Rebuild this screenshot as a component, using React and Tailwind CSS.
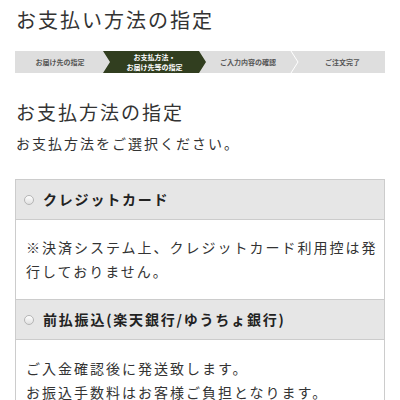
import React from 'react';

const font = { fontFamily: '"Noto Sans CJK JP", "Noto Sans", sans-serif' };

function Steps() {
  return (
    <div className="mx-[15px] mt-[16px] flex h-[22px] bg-[#dedede] text-[7px] font-bold leading-[10px]">
      <div className="flex w-[88px] items-center justify-center pl-[2px] text-[#555]">お届け先の指定</div>
      <div className="flex w-[103px] flex-col items-center justify-center bg-[#313e1f] text-white [clip-path:polygon(0_0,96px_0,103px_50%,96px_100%,0_100%,7px_50%)]">
        <span>お支払方法・</span>
        <span>お届け先等の指定</span>
      </div>
      <div className="flex w-[84px] items-center justify-center text-[#555]">ご入力内容の確認</div>
      <svg width="10" height="22" viewBox="0 0 10 22" className="shrink-0">
        <polyline points="1,0 8,11 1,22" fill="none" stroke="#fff" strokeWidth="1" />
      </svg>
      <div className="flex flex-1 items-center justify-center text-[#555]">ご注文完了</div>
    </div>
  );
}

function Radio() {
  return (
    <span className="mr-[9px] inline-block h-[10px] w-[10px] shrink-0 rounded-full border border-[#b5b5b5] bg-gradient-to-b from-white to-[#e0e0e0]" />
  );
}

function Option({ label, children, pt }) {
  return (
    <>
      <div className="flex h-[40px] items-center border-b border-[#cccccc] bg-[#e6e6e6] pl-[8px] text-[14px] font-bold tracking-[1.8px] text-[#222]">
        <Radio />
        <span>{label}</span>
      </div>
      <div className={`border-b border-[#cccccc] pr-[2px] pl-[10px] text-[14px] leading-[24px] tracking-[2px] text-[#333] ${pt}`}>
        {children}
      </div>
    </>
  );
}

export default function App() {
  return (
    <div className="h-[400px] w-[400px] overflow-hidden bg-white" style={font}>
      <h1 className="pt-[5px] pl-[16px] text-[20px] leading-[30px] font-normal tracking-[2px] text-[#333]">
        お支払い方法の指定
      </h1>
      <Steps />
      <h2 className="mt-[25px] pl-[16px] text-[19px] leading-[28px] font-normal tracking-[2px] text-[#333]">
        お支払方法の指定
      </h2>
      <p className="mt-[6px] pl-[16px] text-[14px] leading-[22px] tracking-[2px] text-[#333]">
        お支払方法をご選択ください。
      </p>
      <div className="mx-[15px] mt-[25px] border-x border-t border-[#cccccc]">
        <Option label="クレジットカード" pt="pt-[15px] pb-[16px]">
          ※決済システム上、クレジットカード利用控は発行しておりません。
        </Option>
        <Option label="前払振込(楽天銀行/ゆうちょ銀行)" pt="pt-[16px] pb-[18px]">
          <p>ご入金確認後に発送致します。</p>
          <p>お振込手数料はお客様ご負担となります。</p>
        </Option>
      </div>
    </div>
  );
}
